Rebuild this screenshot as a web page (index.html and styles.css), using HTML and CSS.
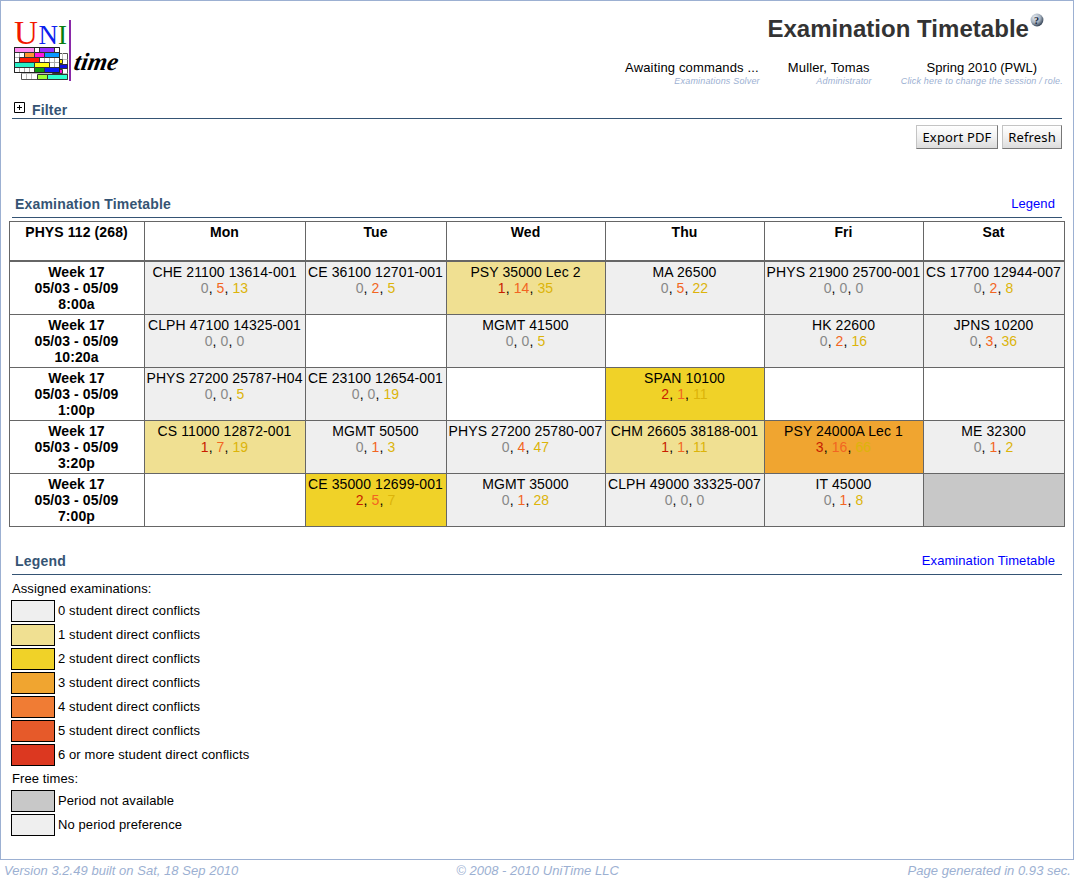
FILE: index.html
```html
<!DOCTYPE html>
<html lang="en">
<head>
<meta charset="utf-8">
<title>Examination Timetable</title>
<link rel="stylesheet" href="styles.css">
</head>
<body>
<div class="frame">
  <header class="header">
    <svg class="logo" width="112" height="74" viewBox="10 10 112 74" role="img" aria-label="UniTime">
      <g class="logo-serif">
        <text x="14" y="44" font-size="34" fill="#f21800" textLength="24" lengthAdjust="spacingAndGlyphs">U</text>
        <text x="38.500" y="44" font-size="27" fill="#0b20ee" textLength="19.500" lengthAdjust="spacingAndGlyphs">N</text>
        <text x="58" y="44" font-size="27" fill="#087c10">I</text>
      </g>
      <g stroke="#333" stroke-width="1">
        <path d="M52.5 53.5h15v26h-46v-7h31z" fill="#fff" stroke="#555"/>
        <path d="M21.5 73.500h46M26.500 73v6M31.500 73v6M62.500 53v13M67.500 59.500h-8" stroke="#bbb" fill="none"/>
        <path d="M59.500 59.500h3v4h-3z" fill="#fff000"/>
        <path d="M59.500 64.500h8v4h-8z" fill="#1010e0"/>
        <path d="M52.500 69.500h10v4h-10z" fill="#ff10d0"/>
        <path d="M37.500 74.500h10v5h-10z" fill="#9cff35"/>
        <path d="M47.500 74.500h20v5h-20z" fill="#30ffd0"/>
        <path d="M14.500 47.500h45v25h-45z" fill="#fff"/>
        <path d="M19.500 52v20M24.500 52v20M29.500 67v5M34.500 47v25M39.500 57v5M44.500 57v5M49.500 57v10M54.500 47v20M14 52.500h46M14 57.500h46M14 62.500h46M14 67.500h46" stroke="#aaa" fill="none"/>
        <path d="M14.500 47.500h20v5h-20z" fill="#ff8cf0"/>
        <path d="M39.500 47.500h15v5h-15z" fill="#9830ff"/>
        <path d="M24.500 52.500h10v5h-10z" fill="#ff9830"/>
        <path d="M34.500 52.500h10v5h-10z" fill="#ff18e0"/>
        <path d="M44.500 52.500h15v5h-15z" fill="#0898ff"/>
        <path d="M19.500 57.500h20v5h-20z" fill="#ff1800"/>
        <path d="M14.500 62.500h20v5h-20z" fill="#28f0c8"/>
        <path d="M34.500 62.500h15v5h-15z" fill="#ffff18"/>
        <path d="M34.500 67.500h10v5h-10z" fill="#109810"/>
        <path d="M44.500 67.500h15v5h-15z" fill="#0818f8"/>
        <path d="M14.500 47.500h45v25h-45z" fill="none" stroke="#222"/>
      </g>
      <path d="M69 20h2v61h-2z" fill="#8a28a8"/>
      <text class="logo-script" transform="translate(73 69.500) skewX(-10)" textLength="44" lengthAdjust="spacingAndGlyphs">time</text>
    </svg>
    <div class="heading">
      <h1 class="title">Examination Timetable<svg class="help" width="14" height="14" viewBox="0 0 14 14"><defs><radialGradient id="ball" cx=".35" cy=".3" r=".7"><stop offset="0" stop-color="#e8eef4"/><stop offset=".6" stop-color="#a3afbd"/><stop offset="1" stop-color="#3c4a5c"/></radialGradient></defs><circle cx="7" cy="7" r="6.400" fill="url(#ball)"/><text x="6.500" y="10.500" text-anchor="middle" class="help-mark">?</text></svg></h1>
      <div class="status">
        <div class="status-item solver"><span>Awaiting commands ...</span><small>Examinations Solver</small></div>
        <div class="status-item user"><span>Muller, Tomas</span><small>Administrator</small></div>
        <div class="status-item session"><span>Spring 2010 (PWL)</span><small>Click here to change the session / role.</small></div>
      </div>
    </div>
  </header>

  <div class="filter">
    <svg class="plus" width="11" height="11" viewBox="0 0 11 11"><path d="M.5.500h10v10H.500z" fill="#fff" stroke="#000"/><path d="M3 5.500h5M5.500 3v5" stroke="#000"/></svg>
    <h2>Filter</h2>
  </div>
  <div class="buttons"><button>Export PDF</button><button class="refresh">Refresh</button></div>

  <div class="section"><h2>Examination Timetable</h2><a>Legend</a></div>
  <table class="grid">
    <colgroup><col class="c-week"><col class="c-mon"><col class="c-tue"><col class="c-mid"><col class="c-mid"><col class="c-mid"><col class="c-tue"></colgroup>
    <thead><tr><th>PHYS 112 (268)</th><th>Mon</th><th>Tue</th><th>Wed</th><th>Thu</th><th>Fri</th><th>Sat</th></tr></thead>
    <tbody>
      <tr><th>Week 17<br>05/03 - 05/09<br>8:00a</th>
        <td class="k0">CHE 21100 13614-001<br><i class="z">0</i>, <i class="m">5</i>, <i class="b">13</i></td>
        <td class="k0">CE 36100 12701-001<br><i class="z">0</i>, <i class="m">2</i>, <i class="b">5</i></td>
        <td class="k1">PSY 35000 Lec 2<br><i class="d">1</i>, <i class="m">14</i>, <i class="b">35</i></td>
        <td class="k0">MA 26500<br><i class="z">0</i>, <i class="m">5</i>, <i class="b">22</i></td>
        <td class="k0">PHYS 21900 25700-001<br><i class="z">0</i>, <i class="z">0</i>, <i class="z">0</i></td>
        <td class="k0">CS 17700 12944-007<br><i class="z">0</i>, <i class="m">2</i>, <i class="b">8</i></td></tr>
      <tr><th>Week 17<br>05/03 - 05/09<br>10:20a</th>
        <td class="k0">CLPH 47100 14325-001<br><i class="z">0</i>, <i class="z">0</i>, <i class="z">0</i></td>
        <td></td>
        <td class="k0">MGMT 41500<br><i class="z">0</i>, <i class="z">0</i>, <i class="b">5</i></td>
        <td></td>
        <td class="k0">HK 22600<br><i class="z">0</i>, <i class="m">2</i>, <i class="b">16</i></td>
        <td class="k0">JPNS 10200<br><i class="z">0</i>, <i class="m">3</i>, <i class="b">36</i></td></tr>
      <tr><th>Week 17<br>05/03 - 05/09<br>1:00p</th>
        <td class="k0">PHYS 27200 25787-H04<br><i class="z">0</i>, <i class="z">0</i>, <i class="b">5</i></td>
        <td class="k0">CE 23100 12654-001<br><i class="z">0</i>, <i class="z">0</i>, <i class="b">19</i></td>
        <td></td>
        <td class="k2">SPAN 10100<br><i class="d">2</i>, <i class="m">1</i>, <i class="b">11</i></td>
        <td></td>
        <td></td></tr>
      <tr><th>Week 17<br>05/03 - 05/09<br>3:20p</th>
        <td class="k1">CS 11000 12872-001<br><i class="d">1</i>, <i class="m">7</i>, <i class="b">19</i></td>
        <td class="k0">MGMT 50500<br><i class="z">0</i>, <i class="m">1</i>, <i class="b">3</i></td>
        <td class="k0">PHYS 27200 25780-007<br><i class="z">0</i>, <i class="m">4</i>, <i class="b">47</i></td>
        <td class="k1">CHM 26605 38188-001<br><i class="d">1</i>, <i class="m">1</i>, <i class="b">11</i></td>
        <td class="k3">PSY 24000A Lec 1<br><i class="d">3</i>, <i class="m">16</i>, <i class="b">66</i></td>
        <td class="k0">ME 32300<br><i class="z">0</i>, <i class="m">1</i>, <i class="b">2</i></td></tr>
      <tr><th>Week 17<br>05/03 - 05/09<br>7:00p</th>
        <td></td>
        <td class="k2">CE 35000 12699-001<br><i class="d">2</i>, <i class="m">5</i>, <i class="b">7</i></td>
        <td class="k0">MGMT 35000<br><i class="z">0</i>, <i class="m">1</i>, <i class="b">28</i></td>
        <td class="k0">CLPH 49000 33325-007<br><i class="z">0</i>, <i class="z">0</i>, <i class="z">0</i></td>
        <td class="k0">IT 45000<br><i class="z">0</i>, <i class="m">1</i>, <i class="b">8</i></td>
        <td class="na"></td></tr>
    </tbody>
  </table>

  <div class="section legend-head"><h2>Legend</h2><a>Examination Timetable</a></div>
  <div class="legend">
    <p>Assigned examinations:</p>
    <ul>
      <li><b class="k0"></b>0 student direct conflicts</li>
      <li><b class="k1"></b>1 student direct conflicts</li>
      <li><b class="k2"></b>2 student direct conflicts</li>
      <li><b class="k3"></b>3 student direct conflicts</li>
      <li><b class="k4"></b>4 student direct conflicts</li>
      <li><b class="k5"></b>5 student direct conflicts</li>
      <li><b class="k6"></b>6 or more student direct conflicts</li>
    </ul>
    <p class="free">Free times:</p>
    <ul>
      <li><b class="na"></b>Period not available</li>
      <li><b class="k0"></b>No period preference</li>
    </ul>
  </div>
</div>
<footer class="footer"><span>Version 3.2.49 built on Sat, 18 Sep 2010</span><span class="copy">© 2008 - 2010 UniTime LLC</span><span class="gen">Page generated in 0.93 sec.</span></footer>
</body>
</html>
```
FILE: styles.css
```css
* { box-sizing: border-box; }
body { margin: 0; width: 1074px; height: 880px; overflow: hidden; background: #fff; color: #000; font: 13px/16px "Liberation Sans", Arial, sans-serif; }
h1, h2, p, ul { margin: 0; padding: 0; }
.frame { height: 860px; border: 1px solid #9cb0d2; padding: 0 8px; }

.header { display: flex; justify-content: space-between; height: 99px; }
.logo { margin: 9px 0 0 1px; }
.logo-serif { font-family: "Liberation Serif", serif; }
.logo-script { font: italic bold 25px "Liberation Serif", serif; }
.heading { padding-top: 11px; }
.title { display: flex; justify-content: flex-end; font-size: 24px; line-height: 33px; color: #333; padding-right: 21px; letter-spacing: .03px; }
.help { margin: 1px 0 0 1px; }
.help-mark { font: bold 10px "Liberation Serif", serif; fill: #162238; }
.status { display: flex; justify-content: flex-end; margin-top: 15px; padding-right: 2px; }
.status-item { display: flex; flex-direction: column; align-items: flex-end; letter-spacing: .15px; }
.status-item small { font-size: 9px; line-height: 10px; font-style: italic; color: #9cb0d2; letter-spacing: .18px; }
.solver span { padding-right: 1px; }
.user { margin-left: 28px; }
.user span { padding-right: 1px; }
.user small { margin-right: -1px; }
.session { margin-left: 30px; align-items: center; }
.session span { letter-spacing: 0; }

.filter { display: flex; height: 19px; margin: 0 3px; border-bottom: 1px solid #355474; }
.plus { margin: 2px 7px 0 2px; }
h2 { font-size: 14px; line-height: 20px; color: #355474; letter-spacing: .18px; }
.buttons { display: flex; justify-content: flex-end; gap: 4px; margin: 6px 3px 0 0; }
button { width: 82px; height: 24px; padding: 0; border: 1px solid; border-color: #c4c4c4 #777 #777 #c4c4c4; border-radius: 0; background: linear-gradient(#fff, #f1f1f1 50%, #dcdcdc); color: #000; font: 13px "Noto Sans", sans-serif; letter-spacing: .15px; }
.refresh { width: 60px; }

.section { display: flex; justify-content: space-between; height: 24px; margin: 45px 3px 3px; padding: 0 7px 0 3px; border-bottom: 1px solid #355474; }
.section a { color: #00f; line-height: 19px; letter-spacing: .08px; }

.grid { width: 1056px; table-layout: fixed; border-collapse: separate; border-spacing: 0; border-left: 1px solid #666; border-top: 1px solid #666; font-size: 14px; letter-spacing: .1px; }
.c-week { width: 135px; }
.c-mon { width: 161px; }
.c-tue { width: 141px; }
.c-mid { width: 159px; }
.grid th, .grid td { height: 53px; padding: 2px 1px 0 0; border-right: 1px solid #666; border-bottom: 1px solid #666; vertical-align: top; text-align: center; white-space: nowrap; }
.grid thead th { height: 40px; border-bottom-width: 2px; }
.grid i { font-style: normal; }
.z { color: #888; }
.d { color: #c81e00; }
.m { color: #f26522; }
.b { color: #dcb40a; }
.k0 { background: #efefef; }
.k1 { background: #f0e092; }
.k2 { background: #f0d228; }
.k3 { background: #f0a530; }
.k4 { background: #f07c34; }
.k5 { background: #e65a2a; }
.k6 { background: #dc3820; }
.na { background: #c8c8c8; }

.legend-head { margin: 24px 3px 6px; }
.legend { letter-spacing: .1px; }
.legend p { margin-left: 3px; height: 18px; }
.legend ul { list-style: none; margin-left: 2px; }
.legend li { display: flex; align-items: center; height: 24px; }
.legend b { width: 44px; height: 22px; margin-right: 3px; border: 1px solid #000; }
.legend .free { margin-top: 4px; }

.footer { display: grid; grid-template-columns: 1fr auto 1fr; padding: 3px 3px 0 4px; color: #9cb0d2; font-style: italic; letter-spacing: .03px; }
.gen { text-align: right; }
```
